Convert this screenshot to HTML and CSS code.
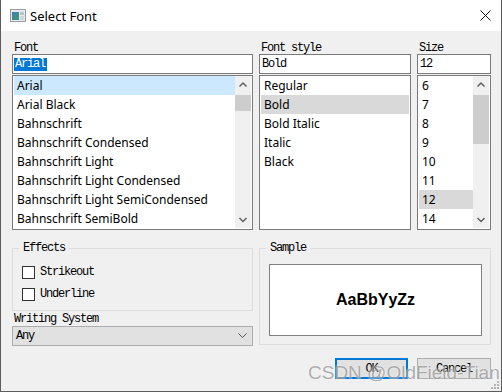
FILE: index.html
```html
<!DOCTYPE html>
<html lang="en">
<head>
	<meta charset="UTF-8">
	<title>Select Font</title>
	<link rel="stylesheet" href="styles.css">
</head>
<body>
	<div class="window">
		<div class="titlebar">
			<svg class="app-icon" width="16" height="13" viewBox="0 0 16 13">
				<defs>
					<linearGradient id="pane" x1="0" y1="0" x2="1" y2="1">
						<stop offset="0" stop-color="#3f7fb6"/>
						<stop offset="1" stop-color="#3c9a6a"/>
					</linearGradient>
				</defs>
				<rect x="0.5" y="0.5" width="15" height="12" fill="#e6eaee" stroke="#9c9c9c"/>
				<rect x="2" y="3" width="7" height="8" fill="url(#pane)"/>
				<rect x="10" y="3" width="4" height="3" fill="#b9c4cc"/>
				<rect x="10" y="7" width="4" height="4" fill="#cfd6db"/>
			</svg>
			<span class="title">Select Font</span>
			<svg class="close" width="11" height="11" viewBox="0 0 11 11">
				<path d="M0.5 0.5 L10.5 10.5 M10.5 0.5 L0.5 10.5" stroke="#111" stroke-width="1"/>
			</svg>
		</div>

		<div class="body">
			<div class="pickers">
				<div class="col">
					<div class="cap">Font</div>
					<div class="edit"><span class="sel">Arial</span></div>
					<div class="list">
						<ul class="items">
							<li class="current">Arial</li>
							<li>Arial Black</li>
							<li>Bahnschrift</li>
							<li>Bahnschrift Condensed</li>
							<li>Bahnschrift Light</li>
							<li>Bahnschrift Light Condensed</li>
							<li>Bahnschrift Light SemiCondensed</li>
							<li>Bahnschrift SemiBold</li>
						</ul>
						<div class="scroll">
							<div class="arrow">
								<svg width="16" height="17" viewBox="0 0 16 17"><path d="M4.5 10.5 L8 7 L11.5 10.5" fill="none" stroke="#606060" stroke-width="1.5"/></svg>
							</div>
							<div class="track">
								<div class="thumb thumb-font"></div>
							</div>
							<div class="arrow">
								<svg width="16" height="17" viewBox="0 0 16 17"><path d="M4.5 7 L8 10.5 L11.5 7" fill="none" stroke="#606060" stroke-width="1.5"/></svg>
							</div>
						</div>
					</div>
				</div>

				<div class="col">
					<div class="cap">Font style</div>
					<div class="edit"><span class="val">Bold</span></div>
					<div class="list">
						<ul class="items">
							<li>Regular</li>
							<li class="picked">Bold</li>
							<li>Bold Italic</li>
							<li>Italic</li>
							<li>Black</li>
						</ul>
					</div>
				</div>

				<div class="col">
					<div class="cap">Size</div>
					<div class="edit"><span class="val">12</span></div>
					<div class="list">
						<ul class="items">
							<li>6</li>
							<li>7</li>
							<li>8</li>
							<li>9</li>
							<li>10</li>
							<li>11</li>
							<li class="picked">12</li>
							<li>14</li>
						</ul>
						<div class="scroll">
							<div class="arrow">
								<svg width="16" height="17" viewBox="0 0 16 17"><path d="M4.5 10.5 L8 7 L11.5 10.5" fill="none" stroke="#606060" stroke-width="1.5"/></svg>
							</div>
							<div class="track">
								<div class="thumb thumb-size"></div>
							</div>
							<div class="arrow">
								<svg width="16" height="17" viewBox="0 0 16 17"><path d="M4.5 7 L8 10.5 L11.5 7" fill="none" stroke="#606060" stroke-width="1.5"/></svg>
							</div>
						</div>
					</div>
				</div>
			</div>

			<div class="lower">
				<div class="left">
					<fieldset class="group effects">
						<legend>Effects</legend>
						<div class="check"><span class="box"></span><span>Strikeout</span></div>
						<div class="check"><span class="box"></span><span>Underline</span></div>
					</fieldset>
					<div class="cap ws">Writing System</div>
					<div class="combo">
						<span>Any</span>
						<svg width="9" height="6" viewBox="0 0 9 6"><path d="M0.5 0.5 L4.5 4.5 L8.5 0.5" fill="none" stroke="#555" stroke-width="1"/></svg>
					</div>
				</div>
				<fieldset class="group sample">
					<legend>Sample</legend>
					<div class="preview">AaBbYyZz</div>
				</fieldset>
			</div>

			<div class="buttons">
				<button class="btn default">OK</button>
				<button class="btn">Cancel</button>
			</div>
		</div>

		<div class="watermark">CSDN @OldField-Tian</div>
		<svg class="grip" width="8" height="8" viewBox="0 0 8 8">
			<rect x="6" y="0" width="2" height="2" fill="#b4b4b4"/>
			<rect x="3" y="3" width="2" height="2" fill="#b4b4b4"/>
			<rect x="6" y="3" width="2" height="2" fill="#b4b4b4"/>
			<rect x="0" y="6" width="2" height="2" fill="#b4b4b4"/>
			<rect x="3" y="6" width="2" height="2" fill="#b4b4b4"/>
			<rect x="6" y="6" width="2" height="2" fill="#b4b4b4"/>
		</svg>
	</div>
</body>
</html>
```

FILE: styles.css
```css
*{
	margin: 0;
	padding: 0;
	box-sizing: border-box;
}

body{
	width: 502px;
	height: 392px;
	background-color: #f0f0f0;
	font-family: "Noto Sans", "Liberation Sans", sans-serif;
	font-size: 12px;
	color: #000;
}

.window{
	position: relative;
	height: 392px;
	overflow: hidden;
	background-color: #f0f0f0;
	border: 1px solid #5c5c5c;
	border-top: 0;
}

/* title bar */
.titlebar{
	height: 31px;
	background-color: #fff;
	display: flex;
	align-items: center;
	padding-left: 9px;
}
.app-icon{
	margin-right: 4px;
}
.title{
	font-size: 13px;
}
.close{
	margin-left: auto;
	margin-right: 10px;
}

.body{
	padding: 11px 10px 0 11px;
}

/* bitmap-ish dialog font */
.cap,
.edit,
legend,
.check,
.combo,
.btn{
	font-family: "Liberation Mono", "DejaVu Sans Mono", monospace;
	font-size: 12px;
	letter-spacing: -1.2px;
}

.pickers,
.lower{
	display: grid;
	grid-template-columns: 241px 152px 74px;
	column-gap: 6px;
}

.cap{
	height: 12px;
	line-height: 12px;
	padding-left: 2px;
}

.edit{
	height: 20px;
	border: 1px solid #7a7a7a;
	background-color: #fff;
	padding: 0 1px;
	display: flex;
	align-items: center;
}
.edit .sel{
	background-color: #0078d7;
	color: #fff;
	line-height: 13px;
	padding: 0 2px 0 1px;
}
.edit .val{
	padding-left: 1px;
}

.list{
	margin-top: 1px;
	height: 155px;
	border: 1px solid #7a7a7a;
	background-color: #fff;
	padding: 0 1px;
	display: flex;
}
.items{
	list-style: none;
	flex: 1;
	min-width: 0;
}
.items li{
	height: 19px;
	line-height: 19px;
	padding-left: 3px;
	white-space: nowrap;
	overflow: hidden;
}
.items li.current{
	background-color: #cce8ff;
}
.items li.picked{
	background-color: #d9d9d9;
}

/* scroll bars */
.scroll{
	width: 16px;
	height: 152px;
	background-color: #f0f0f0;
	display: flex;
	flex-direction: column;
}
.arrow{
	height: 17px;
}
.arrow svg{
	display: block;
}
.track{
	flex: 1;
}
.thumb{
	margin: 2px 0 0 0;
	background-color: #cdcdcd;
}
.thumb-font{
	height: 16px;
}
.thumb-size{
	height: 49px;
}

/* lower part */
.lower{
	margin-top: 12px;
	align-items: start;
}

.group{
	border: 1px solid #dcdcdc;
}
.group legend{
	line-height: 12px;
	margin-left: -3px;
	padding: 0 4px;
}

.effects{
	padding: 7px 9px 5px 9px;
}
.check{
	height: 22px;
	display: flex;
	align-items: center;
	gap: 5px;
}
.box{
	width: 13px;
	height: 13px;
	border: 1px solid #333;
	background-color: #fff;
}

.ws{
	margin-top: 2px;
}
.combo{
	margin-top: 1px;
	height: 20px;
	border: 1px solid #adadad;
	background-color: #e1e1e1;
	padding: 0 5px 0 3px;
	display: flex;
	align-items: center;
	justify-content: space-between;
}

.sample{
	grid-column: 2 / 4;
	padding: 10px 8px 8px 9px;
}
.preview{
	height: 72px;
	border: 1px solid #828282;
	background-color: #fff;
	display: flex;
	align-items: center;
	justify-content: center;
	font-family: "Liberation Sans", Arial, sans-serif;
	font-weight: bold;
	font-size: 16px;
}

/* buttons */
.buttons{
	margin-top: 12px;
	display: flex;
	justify-content: flex-end;
	gap: 9px;
}
.btn{
	width: 74px;
	height: 21px;
	border: 1px solid #adadad;
	background-color: #e1e1e1;
	color: #000;
}
.btn.default{
	width: 73px;
	border: 2px solid #0078d7;
}

/* overlays */
.watermark{
	position: absolute;
	left: 307px;
	top: 362px;
	font-family: "Liberation Sans", Arial, sans-serif;
	font-size: 19px;
	color: rgba(120, 120, 120, 0.6);
	text-shadow: 0 0 2px rgba(255, 255, 255, 0.9);
	white-space: nowrap;
}
.grip{
	position: absolute;
	right: 2px;
	bottom: 2px;
}
```
